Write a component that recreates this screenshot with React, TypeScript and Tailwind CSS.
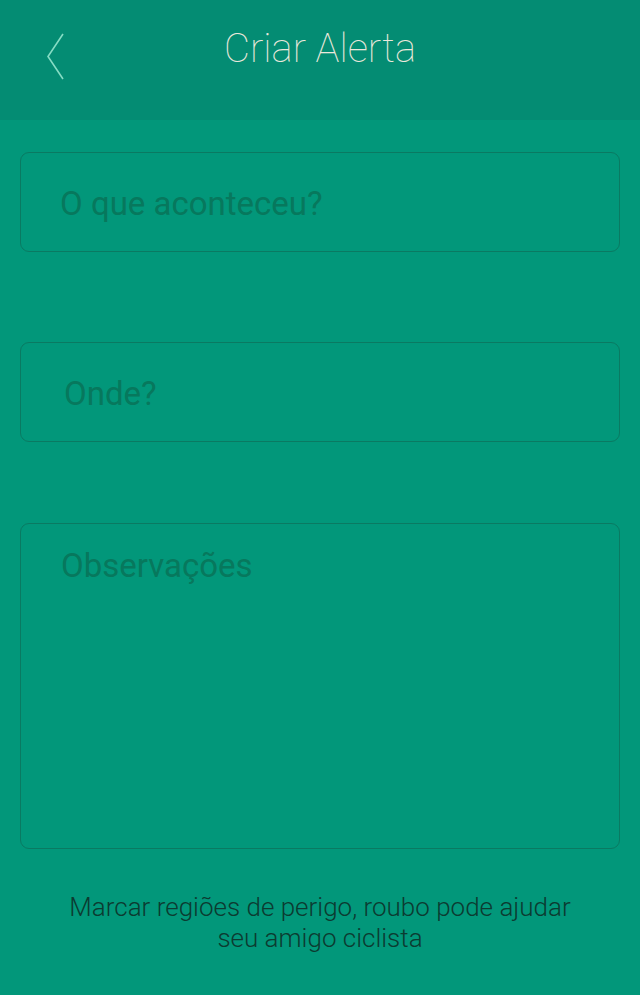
import React from "react"

const fields = [
  { label: "O que aconteceu?", pad: "pl-[39px]" },
  { label: "Onde?", pad: "pl-[43px]" },
]

export default function App() {
  return (
    <div className="w-[640px] h-[995px] bg-[#02977a] flex flex-col font-['Roboto',sans-serif]">
      {/* Header */}
      <header className="relative h-[120px] bg-[#048c73] flex items-start justify-center pt-[23px]">
        <button className="absolute left-[46px] top-[33px] w-[20px] h-[48px]">
          <svg viewBox="0 0 20 48" className="w-[20px] h-[48px]" fill="none" stroke="#86dcc4" strokeWidth="1.6">
            <path d="M17 1 L2 23.5 L17 46" />
          </svg>
        </button>
        <h1 className="text-[40px] font-thin text-[#ebe8dc] leading-[52px]">Criar Alerta</h1>
      </header>

      <main className="flex flex-col px-[20px]">
        {fields.map((f, i) => (
          <div
            key={i}
            className={`h-[100px] rounded-[9px] border border-[#0a7a62] flex items-center ${f.pad} ${i === 0 ? "mt-[32px]" : "mt-[90px]"}`}
          >
            <span className="text-[33px] text-[#07785d] leading-[40px] pt-[3px]">{f.label}</span>
          </div>
        ))}

        {/* Observações */}
        <div className="mt-[81px] h-[326px] rounded-[9px] border border-[#0a7a62] pl-[40px] pt-[22px]">
          <span className="text-[33px] text-[#07785d] leading-[40px]">Observações</span>
        </div>

        <p className="mt-[43px] text-center text-[26px] font-light leading-[31px] text-[#0c3b31]">
          Marcar regiões de perigo, roubo pode ajudar
          <br />
          seu amigo ciclista
        </p>
      </main>
    </div>
  )
}
